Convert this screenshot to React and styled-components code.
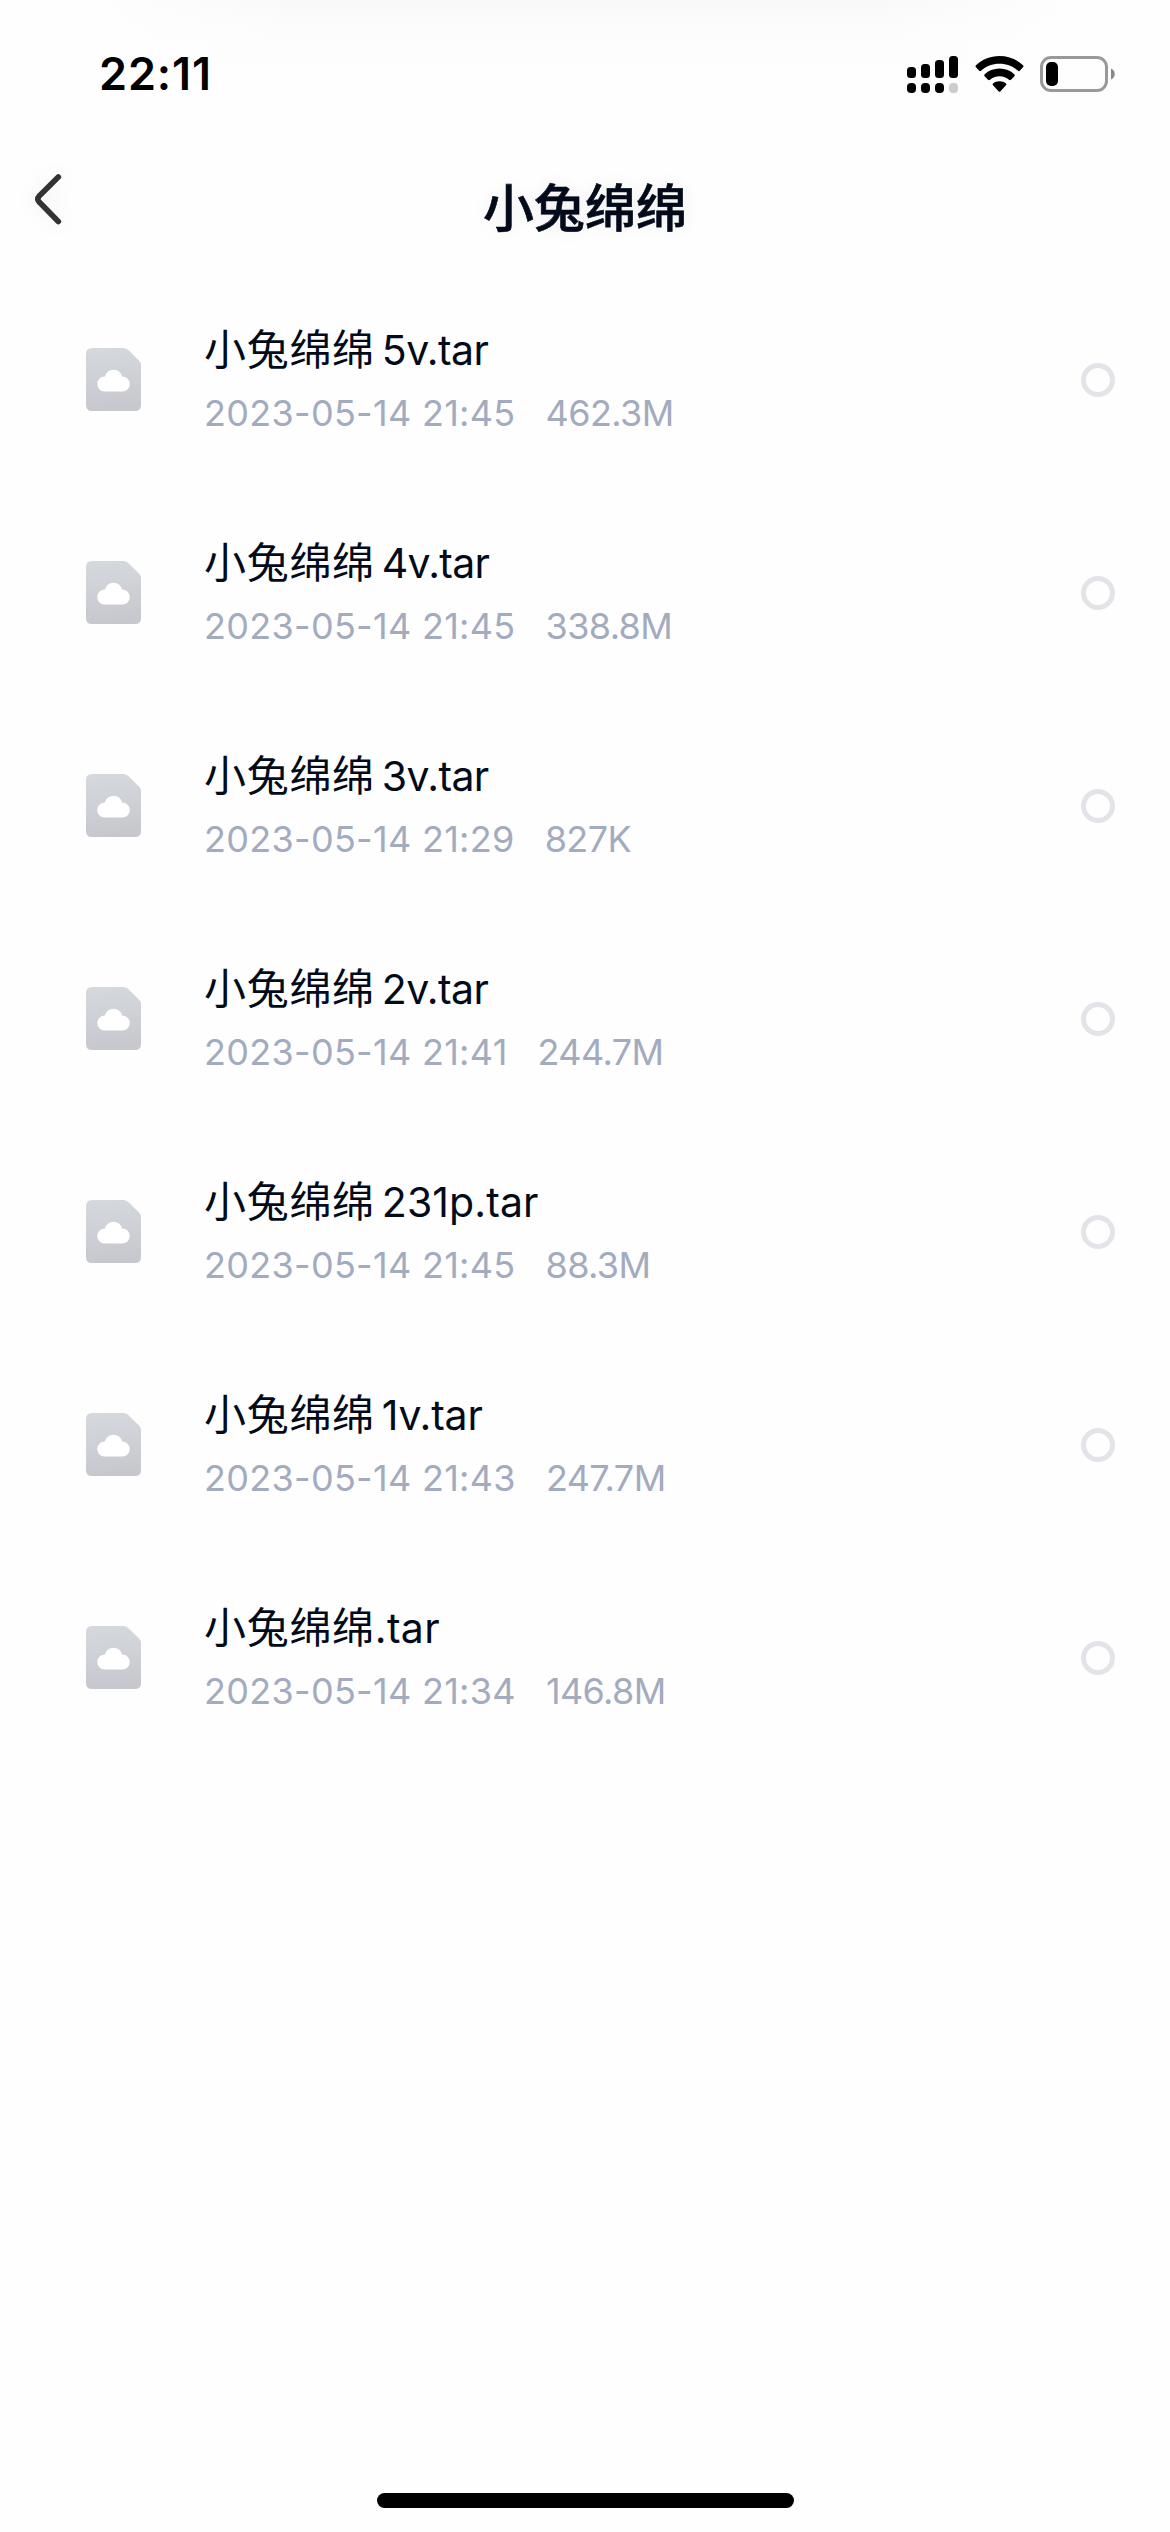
import React from 'react';
import styled, { createGlobalStyle } from 'styled-components';

const GlobalStyle = createGlobalStyle`
  * { box-sizing: border-box; }
  body { margin: 0; background: #fefefe; }
`;

const Screen = styled.main`
  width: 1170px;
  height: 2532px;
  display: flex;
  flex-direction: column;
  overflow: hidden;
  background:
    linear-gradient(90deg, #fefefe 90px, rgba(254, 254, 254, 0) 320px, rgba(254, 254, 254, 0) 850px, #fefefe 1080px) 0 0 / 100% 90px no-repeat,
    linear-gradient(180deg, #f8f8f8 0, #fafafa 14px, #fcfcfc 30px, #fdfdfd 52px, #fefefe 84px) 0 0 / 100% 90px no-repeat,
    #fefefe;
  font-family: Inter, "Noto Sans CJK SC", sans-serif;
  color: #030b1a;
`;

const StatusBar = styled.header`
  height: 140px;
  padding: 8px 54px 0 99px;
  display: flex;
  align-items: center;
  justify-content: space-between;
  color: #000;
`;

const Clock = styled.time`
  font-size: 45px;
  font-weight: 600;
  line-height: 54px;
  letter-spacing: 0.9px;
`;

const Indicators = styled.div`
  display: flex;
  align-items: center;
  gap: 16px;
`;

const NavBar = styled.nav`
  height: 133px;
  display: grid;
  grid-template-columns: 120px 1fr 120px;
  align-items: center;
`;

const BackButton = styled.button`
  width: 120px;
  height: 118px;
  margin-bottom: 15px;
  padding: 0 0 0 33px;
  display: flex;
  align-items: center;
  border: 0;
  background: none;
  filter: drop-shadow(0 0 10px rgba(0, 0, 0, 0.07));
`;

const Title = styled.h1`
  margin: 0;
  padding-top: 4px;
  font-size: 51px;
  line-height: 70px;
  font-weight: 500;
  text-align: center;
  -webkit-text-stroke: 0.6px #030b1a;
  text-shadow: 0 0 18px rgba(0, 0, 0, 0.08);
`;

const FileList = styled.ul`
  flex: 1;
  margin: 0;
  padding: 0;
  list-style: none;
`;

const FileRow = styled.li`
  height: 213px;
  padding: 0 55px 0 86px;
  display: flex;
  align-items: center;
`;

const FileText = styled.div`
  flex: 1;
  margin-left: 63px;
  display: flex;
  flex-direction: column;
  gap: 11px;
`;

const FileName = styled.div`
  display: flex;
  align-items: baseline;
  gap: ${(p) => (p.$spaced ? '7px' : '0')};
  font-size: 42px;
  line-height: 56px;
`;

const Han = styled.span`
  letter-spacing: 0.7px;
`;

const Latin = styled.span`
  font-size: 41px;
  letter-spacing: ${(p) => p.$tracking}px;
`;

const Meta = styled.div`
  display: flex;
  gap: 30px;
  font-size: 36px;
  line-height: 48px;
  letter-spacing: 0.3px;
  color: #a3abbf;
`;

const Size = styled.span`
  letter-spacing: -0.6px;
`;

const Radio = styled.span`
  width: 34px;
  height: 34px;
  border: 5px solid #e2e4e7;
  border-radius: 50%;
`;

const HomeArea = styled.footer`
  height: 39px;
  padding-left: 1px;
  display: flex;
  justify-content: center;
`;

const HomeIndicator = styled.div`
  width: 417px;
  height: 15px;
  border-radius: 8px;
  background: #000;
`;

const files = [
  { name: '5v.tar', time: '21:45', size: '462.3M', tracking: -0.6 },
  { name: '4v.tar', time: '21:45', size: '338.8M', tracking: -0.7 },
  { name: '3v.tar', time: '21:29', size: '827K', tracking: -0.6 },
  { name: '2v.tar', time: '21:41', size: '244.7M', tracking: -0.6 },
  { name: '231p.tar', time: '21:45', size: '88.3M', tracking: 0.1 },
  { name: '1v.tar', time: '21:43', size: '247.7M', tracking: -0.2 },
  { name: '.tar', time: '21:34', size: '146.8M', tracking: 0.3 },
];

const Signal = () => (
  <svg width="52" height="38" viewBox="0 -1 52 38">
    <rect x="0" y="11" width="9" height="11" rx="3.5" />
    <rect x="14" y="8" width="9" height="14" rx="3.5" />
    <rect x="28" y="4" width="9" height="18" rx="3.5" />
    <rect x="42" y="0" width="9" height="22" rx="3.5" />
    <rect x="0" y="27" width="9" height="10" rx="4" />
    <rect x="14" y="27" width="9" height="10" rx="4" />
    <rect x="28" y="27" width="9" height="10" rx="4" />
    <rect x="42" y="27" width="9" height="10" rx="4" fill="#ccc" />
  </svg>
);

const Wifi = () => (
  <svg width="49" height="37" viewBox="0 0 49 37">
    <path d="M24.5 0C34 0 42 3.6 48 9.3Q49 10.2 48 11.2L45 14.6Q44 15.6 43 14.7C38 10.2 31.6 7.7 24.5 7.7S11 10.2 6 14.7Q5 15.6 4 14.6L1 11.2Q0 10.2 1 9.3C7 3.6 15 0 24.5 0Z" />
    <path d="M24.5 12.6C30.5 12.6 35.5 14.8 39.3 18.2Q40.3 19.2 39.4 20.2L36 23.8Q35 24.7 34 23.8C31.4 21.6 28.3 20.3 24.5 20.3S17.6 21.6 15 23.8Q14 24.7 13 23.8L9.6 20.2Q8.7 19.2 9.7 18.2C13.5 14.8 18.5 12.6 24.5 12.6Z" />
    <path d="M24.5 25.3C27.2 25.3 29.3 26.1 31 27.4Q32 28.3 31 29.3L25.5 35.2Q24.5 36.2 23.5 35.2L18 29.3Q17 28.3 18 27.4C19.7 26.1 21.8 25.3 24.5 25.3Z" />
  </svg>
);

const Battery = () => (
  <svg width="76" height="36" viewBox="0 0 76 36">
    <rect x="1.5" y="1.5" width="65" height="33" rx="9.5" fill="none" stroke="#999" strokeWidth="3" />
    <rect x="6" y="6" width="12" height="24" rx="5" />
    <path d="M71 12.5C76 14.5 76 21.5 71 23.5Z" fill="#888" />
  </svg>
);

const BackIcon = () => (
  <svg width="32" height="56" viewBox="0 0 32 56">
    <path d="M25.3 6L6 25.3Q3.6 28 6 30.7L25.3 50.5" fill="none" stroke="#333" strokeWidth="5.6" strokeLinecap="round" strokeLinejoin="round" />
  </svg>
);

const FileIcon = () => (
  <svg width="55" height="63" viewBox="0 0 55 63">
    <defs>
      <linearGradient id="sheet" x1="0" y1="0" x2="0.1" y2="1">
        <stop offset="0" stopColor="#d5d9de" />
        <stop offset="1" stopColor="#c7c8ce" />
      </linearGradient>
    </defs>
    <path d="M6 0H37.5Q40 0 42 1.8L53 12.5Q55 14.5 55 17V57Q55 63 49 63H6Q0 63 0 57V6Q0 0 6 0Z" fill="url(#sheet)" />
    <path d="M18.5 43.5A7.5 7.5 0 0 1 19 28.5A8.7 8.7 0 0 1 36 28.5A7.5 7.5 0 0 1 36.5 43.5Z" fill="#fff" />
  </svg>
);

export default function App() {
  return (
    <Screen>
      <GlobalStyle />
      <StatusBar>
        <Clock>22:11</Clock>
        <Indicators>
          <Signal />
          <Wifi />
          <Battery />
        </Indicators>
      </StatusBar>
      <NavBar>
        <BackButton aria-label="返回"><BackIcon /></BackButton>
        <Title>小兔绵绵</Title>
      </NavBar>
      <FileList>
        {files.map(({ name, time, size, tracking }) => (
          <FileRow key={name}>
            <FileIcon />
            <FileText>
              <FileName $spaced={name[0] !== '.'}>
                <Han>小兔绵绵</Han>
                <Latin $tracking={tracking}>{name}</Latin>
              </FileName>
              <Meta>
                <span>2023-05-14 {time}</span>
                <Size>{size}</Size>
              </Meta>
            </FileText>
            <Radio />
          </FileRow>
        ))}
      </FileList>
      <HomeArea><HomeIndicator /></HomeArea>
    </Screen>
  );
}
